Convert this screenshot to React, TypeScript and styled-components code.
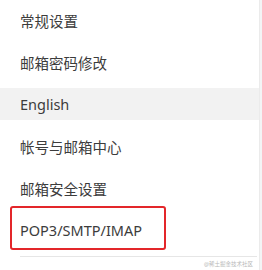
import React from 'react';
import styled, { createGlobalStyle } from 'styled-components';

const GlobalStyle = createGlobalStyle`
  html, body {
    margin: 0;
    padding: 0;
    background: #ffffff;
  }
  body {
    font-family: "Noto Sans", "Noto Sans CJK SC", sans-serif;
  }
`;

const items = [
  { id: 'general', label: '常规设置' },
  { id: 'password', label: '邮箱密码修改' },
  { id: 'lang', label: 'English', active: true },
  { id: 'account', label: '帐号与邮箱中心' },
  { id: 'security', label: '邮箱安全设置' },
  { id: 'pop', label: 'POP3/SMTP/IMAP', marked: true },
];

const App = () => {
  return (
    <Page>
      <GlobalStyle />
      <Panel>
        <Menu>
          {items.map((item) => (
            <MenuItem key={item.id} $active={item.active} $marked={item.marked}>
              {item.label}
            </MenuItem>
          ))}
        </Menu>
        <Divider />
        <Watermark>@稀土掘金技术社区</Watermark>
      </Panel>
      <EdgeStrip />
    </Page>
  );
};

const Page = styled.div`
  display: flex;
  width: 262px;
  height: 270px;
  overflow: hidden;
`;

const Panel = styled.div`
  width: 260px;
  display: flex;
  flex-direction: column;
  background: #ffffff;
`;

const Menu = styled.ul`
  list-style: none;
  margin: 0;
  padding: 4px 0 0;
  display: flex;
  flex-direction: column;
  gap: 10px;
`;

const MenuItem = styled.li<{ $active?: boolean; $marked?: boolean }>`
  position: relative;
  height: 32px;
  display: flex;
  align-items: center;
  padding-left: 20px;
  font-size: 14.5px;
  color: #3c3c3c;
  background: ${(p) => (p.$active ? '#f2f2f2' : 'transparent')};

  ${(p) =>
    p.$marked &&
    `
    &::after {
      content: '';
      position: absolute;
      left: 10px;
      top: -8px;
      width: 156px;
      height: 44px;
      box-sizing: border-box;
      border: 2.5px solid #e3262a;
      border-radius: 3px;
    }
  `}
`;

const Divider = styled.div`
  margin: 10px 2px 0 20px;
  border-top: 1px solid #e6e6e6;
`;

const Watermark = styled.div`
  align-self: flex-end;
  margin: 3px 6px 0 0;
  font-size: 5.5px;
  color: #b8b8b8;
`;

const EdgeStrip = styled.div`
  width: 2px;
  background: #f3f4f6;
  border-left: 1px solid #ebebeb;
`;

export default App;
